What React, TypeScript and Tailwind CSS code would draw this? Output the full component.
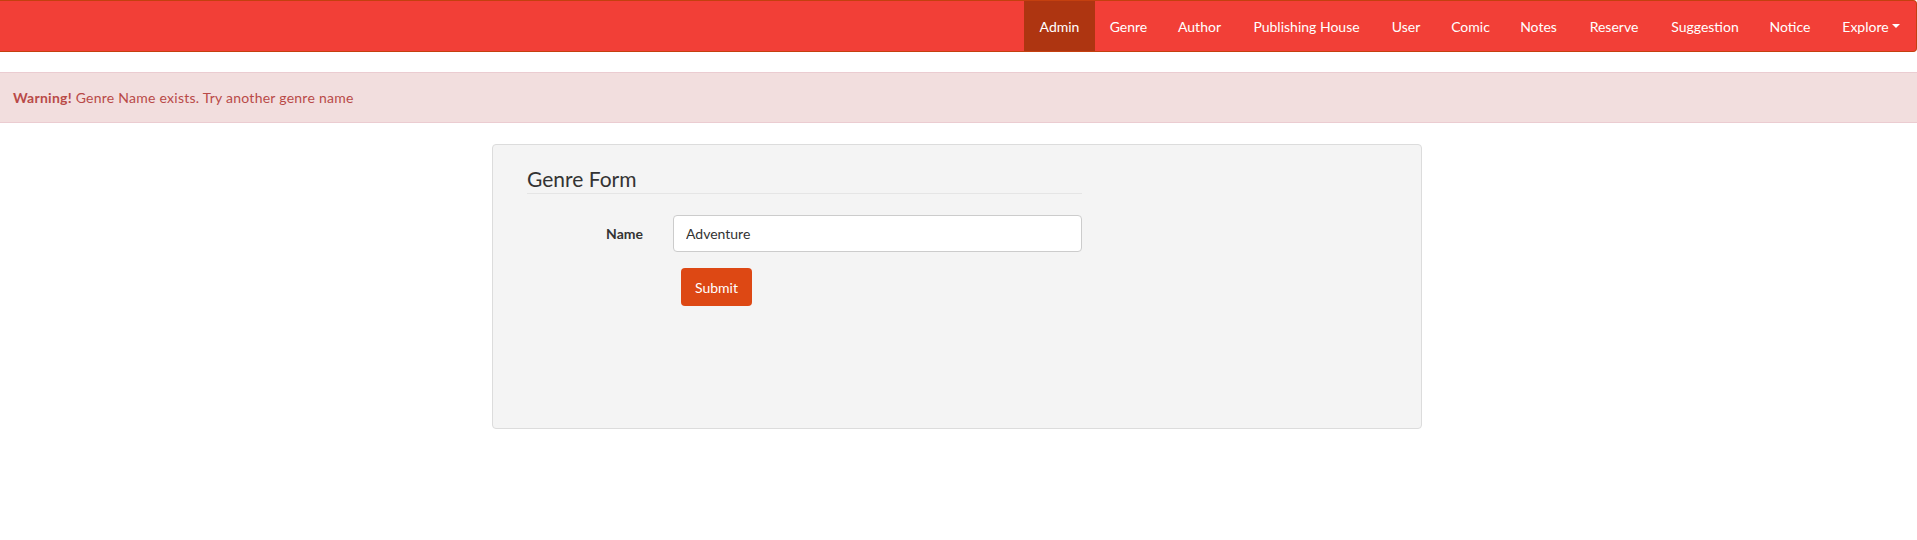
import React from "react";

const items: { label: string; w: string; active?: boolean; caret?: boolean }[] = [
  { label: "Admin", w: "w-[71px]", active: true },
  { label: "Genre", w: "w-[67px]" },
  { label: "Author", w: "w-[75px]" },
  { label: "Publishing House", w: "w-[139px]" },
  { label: "User", w: "w-[60px]" },
  { label: "Comic", w: "w-[69px]" },
  { label: "Notes", w: "w-[67px]" },
  { label: "Reserve", w: "w-[84px]" },
  { label: "Suggestion", w: "w-[98px]" },
  { label: "Notice", w: "w-[72px]" },
  { label: "Explore", w: "w-[90px]", caret: true },
];

export default function App() {
  return (
    <div
      className="min-h-[540px] bg-white text-[14px] text-[#333]"
      style={{ fontFamily: "Lato, 'Noto Sans', sans-serif" }}
    >
      <nav className="h-[52px] bg-[#f23f37] border-y border-r border-[#c4400f] rounded-r-[4px] flex justify-end">
        <ul className="flex h-full">
          {items.map((it) => (
            <li
              key={it.label}
              className={
                "h-full flex items-center justify-center text-white text-[14px] " +
                it.w +
                (it.active ? " bg-[#ae3511]" : "")
              }
            >
              <span>{it.label}</span>
              {it.caret && (
                <span className="ml-[3px] inline-block w-0 h-0 border-l-[4px] border-r-[4px] border-t-[4px] border-l-transparent border-r-transparent border-t-white" />
              )}
            </li>
          ))}
        </ul>
      </nav>

      <div className="mt-[20px] h-[51px] bg-[#f2dede] border-y border-[#ebccd1] text-[#b94a48] flex items-center pl-[13px]">
        <span className="tracking-[0.25px]">
          <strong className="font-bold">Warning!</strong> Genre Name exists. Try another genre name
        </span>
      </div>

      <div className="mt-[21px] ml-[492px] w-[930px] h-[285px] bg-[#f4f4f4] border border-[#dcdcdc] rounded-[4px] pl-[34px] pt-[19px]">
        <div className="w-[555px]">
          <div className="h-[30px] leading-[30px] text-[21px] text-[#333] border-b border-[#e5e5e5]">
            Genre Form
          </div>
          <div className="mt-[21px] flex items-center">
            <label className="w-[116px] text-right font-bold text-[#333]">Name</label>
            <input
              readOnly
              value="Adventure"
              className="ml-[30px] w-[409px] h-[37px] bg-white border border-[#cccccc] rounded-[4px] px-[12px] text-[14px] text-[#333] outline-none"
              style={{ fontFamily: "Lato, 'Noto Sans', sans-serif" }}
            />
          </div>
          <div className="mt-[16px] pl-[154px]">
            <button
              className="w-[71px] h-[38px] bg-[#dd4814] text-white rounded-[4px] text-[14px]"
              style={{ fontFamily: "Lato, 'Noto Sans', sans-serif" }}
            >
              Submit
            </button>
          </div>
        </div>
      </div>
    </div>
  );
}
